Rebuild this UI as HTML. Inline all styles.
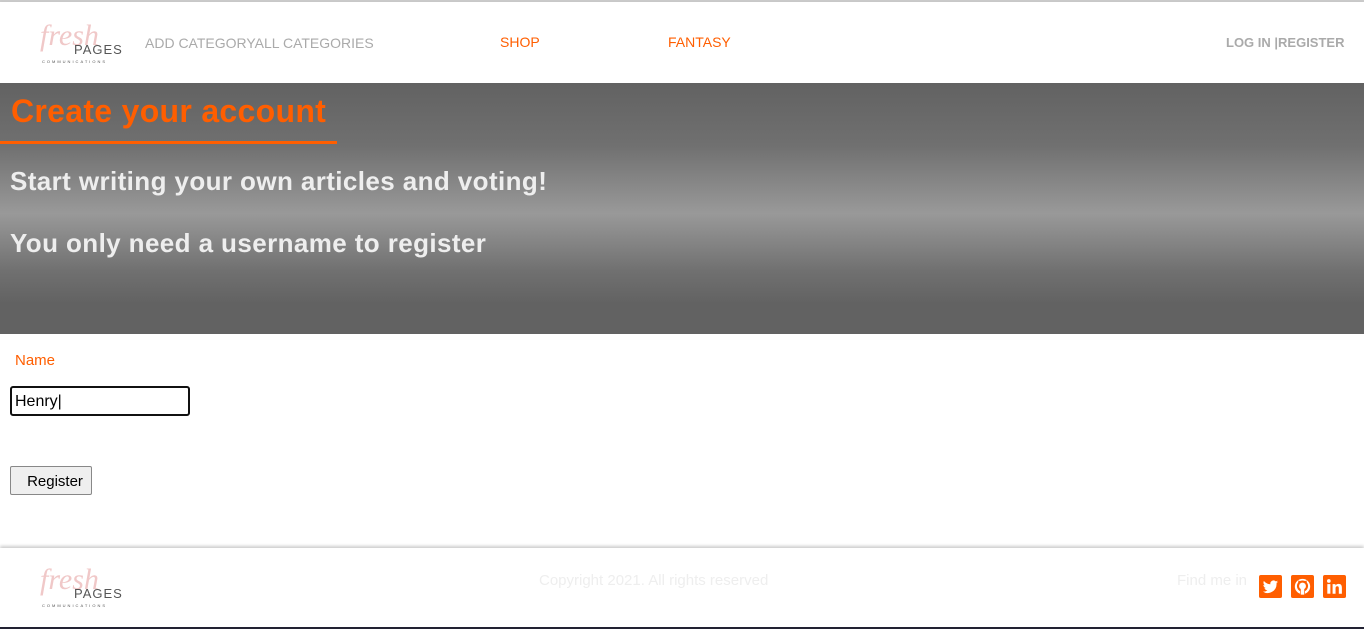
<!DOCTYPE html>
<html><head><style>
body{margin:0;width:1364px;height:629px;overflow:hidden;font-family:"Liberation Sans",sans-serif;background:#fff;position:relative}
.top{position:absolute;left:0;top:0;width:1364px;height:2px;background:#ccc}
.nav{position:absolute;top:2px;left:0;width:1364px;height:81px;background:#fff;box-shadow:0 3px 6px rgba(0,0,0,.15)}
.logo{position:absolute;width:110px;height:40px}
.logo .f{position:absolute;left:18px;top:-16px;font-family:"Liberation Serif",serif;font-style:italic;font-size:30px;color:#f0c8c8}
.logo .p{position:absolute;left:52px;top:7px;font-size:13px;color:#555;letter-spacing:1px}
.logo .c{position:absolute;left:20px;top:24px;font-size:4px;color:#555;letter-spacing:2px}
.t{position:absolute;font-size:14px}
.banner{position:absolute;top:83px;left:0;width:1364px;height:251px;background:linear-gradient(#626262 0%,#707070 25%,#999 52%,#707070 75%,#626262 88%,#626262 100%)}
h1{position:absolute;left:11px;top:93px;margin:0;font-size:32px;color:#ff5e00;font-weight:bold;letter-spacing:0.3px}
.ul{position:absolute;left:0;top:141px;width:337px;height:3px;background:#ff5e00}
.h2{position:absolute;left:10px;font-size:26px;font-weight:bold;color:#eee;letter-spacing:0.4px}
.foot{position:absolute;top:548px;left:0;width:1364px;height:81px;background:#fff;box-shadow:0 -2px 3px rgba(0,0,0,.2) }
.ic{position:absolute;top:575px;width:23px;height:23px}
</style></head><body>
<div class="top"></div>
<div class="nav">
<div class="logo" style="left:22px;top:33px"><span class="f">fresh</span><span class="p">PAGES</span><span class="c">COMMUNICATIONS</span></div>
<div class="t" style="left:145px;top:33px;color:#aaa">ADD CATEGORYALL CATEGORIES</div>
<div class="t" style="left:500px;top:32px;color:#ff5e00">SHOP</div>
<div class="t" style="left:668px;top:32px;color:#ff5e00">FANTASY</div>
<div class="t" style="left:1226px;top:33px;color:#aaa;font-weight:bold;font-size:13px">LOG IN |REGISTER</div>
</div>
<div class="banner"></div>
<h1>Create your account</h1>
<div class="ul"></div>
<div class="h2" style="top:166px">Start writing your own articles and voting!</div>
<div class="h2" style="top:228px">You only need a username to register</div>
<div class="t" style="left:15px;top:352px;color:#ff5e00;font-size:15px">Name</div>
<div style="position:absolute;left:10px;top:386px;height:26px;border:2px solid #111;border-radius:3px;font-size:16px;line-height:27px;padding-left:3px;width:173px">Henry|</div>
<div style="position:absolute;left:10px;top:466px;width:82px;height:29px;border:1px solid #888;border-radius:2px;background:#efefef;font-size:15px;line-height:29px;text-align:center;padding-left:8px;box-sizing:border-box">Register</div>
<div class="foot">
<div class="logo" style="left:22px;top:31px"><span class="f">fresh</span><span class="p">PAGES</span><span class="c">COMMUNICATIONS</span></div>
<div class="t" style="left:539px;top:24px;color:#eee;font-size:15px">Copyright 2021. All rights reserved</div>
<div class="t" style="left:1177px;top:24px;color:#eee;font-size:15px">Find me in</div>
</div>
<svg class="ic" style="left:1259px" viewBox="0 0 24 24"><rect width="24" height="24" rx="2" fill="#ff5e00"/><path fill="#fff" d="M20 7.2c-.6.3-1.2.4-1.9.5.7-.4 1.2-1 1.4-1.8-.6.4-1.3.6-2 .8a3.3 3.3 0 0 0-5.6 3C9.200 9.600 6.800 8.300 5.100 6.300c-.9 1.500-.4 3.400 1 4.400-.5 0-1-.2-1.500-.4 0 1.600 1.100 3 2.600 3.300-.5.100-1 .200-1.500.100.400 1.300 1.700 2.300 3.100 2.300A6.600 6.600 0 0 1 4 17.300 9.300 9.300 0 0 0 18.300 9v-.4c.7-.4 1.200-1 1.700-1.400z"/></svg>
<svg class="ic" style="left:1291px" viewBox="0 0 24 24"><rect width="24" height="24" rx="2" fill="#ff5e00"/><circle cx="12" cy="12" r="8" fill="#fff"/><circle cx="12" cy="11.5" r="5.8" fill="#ff5e00"/><rect x="9.5" y="16" width="5" height="4.5" fill="#ff5e00"/><path d="M7.5 8 7.8 5.5 10 7M16.5 8 16.2 5.5 14 7" fill="#ff5e00"/><circle cx="12" cy="11.5" r="3.6" fill="#fff"/><rect x="10.2" y="14" width="3.6" height="6.5" fill="#fff"/></svg>
<svg class="ic" style="left:1323px" viewBox="0 0 24 24"><rect width="24" height="24" rx="2" fill="#ff5e00"/><rect x="4.5" y="9.5" width="3.2" height="10" fill="#fff"/><circle cx="6.1" cy="6.2" r="1.9" fill="#fff"/><path fill="#fff" d="M10 9.5h3v1.500c.6-1 1.700-1.800 3.300-1.800 2.600 0 3.400 1.600 3.400 4.200V19.500h-3.200v-5.500c0-1.300-.3-2.200-1.600-2.200-1.400 0-1.800 1-1.800 2.300v5.400H10z"/></svg>
<div style="position:absolute;left:0;top:627px;width:1364px;height:2px;background:#223"></div>
</body></html>
